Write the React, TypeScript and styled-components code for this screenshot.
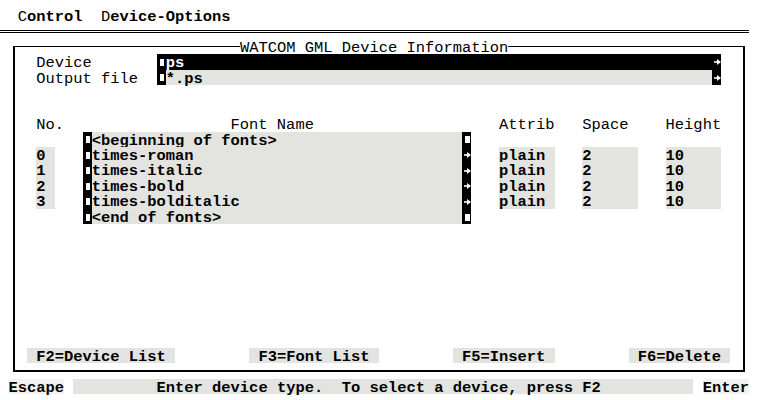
import React from "react";
import styled, { createGlobalStyle } from "styled-components";

const CW = 9.256;
const RH = 15.46;
const SHIFT = 2;
const cw = (n: number) => `${(n * CW).toFixed(3)}px`;
const GRAY = "#e3e4e0";

const GlobalStyle = createGlobalStyle`
  html, body { margin: 0; padding: 0; background: #fff; }
  body {
    font-family: "Liberation Mono", "Courier New", monospace;
    font-size: 15.43px;
    line-height: ${RH + 2 * SHIFT}px;
    color: #000;
  }
  #root { width: 761px; height: 400px; overflow: hidden; }
`;

const Screen = styled.div`
  width: 761px;
  height: 400px;
  padding-top: 7.9px;
  box-sizing: border-box;
  display: flex;
  flex-direction: column;
  white-space: pre;
`;

const MenuBar = styled.nav`
  display: flex;
  gap: ${cw(2)};
  height: ${RH}px;
  padding-left: ${(8.5 + CW).toFixed(3)}px;
`;
const MenuItem = styled.span`
  font-weight: 700;
`;
const Hot = styled.span`
  font-weight: 400;
`;

const RuleRow = styled.div`
  height: ${RH}px;
  display: flex;
  align-items: center;
`;
const DoubleRule = styled.div`
  width: 749px;
  height: 1px;
  border-top: 1px solid #000;
  border-bottom: 1px solid #000;
`;

const Dialog = styled.section`
  margin-top: 7.23px;
  margin-left: 13px;
  width: 732.3px;
  height: 326.15px;
  box-sizing: border-box;
  border: 2px solid #000;
  border-top-width: 1px;
  padding: 0 3.6px 6.72px 2.756px;
  display: flex;
  flex-direction: column;
`;

const TitleRow = styled.div`
  height: ${RH}px;
  margin-top: -8.23px;
  padding-left: ${cw(24)};
  display: flex;
`;
const Title = styled.span`
  background: #fff;
`;

const FieldRow = styled.div`
  display: flex;
  height: ${RH}px;
`;
const Label = styled.span`
  width: ${cw(15)};
  padding-left: ${cw(2)};
  box-sizing: border-box;
`;
const Field = styled.div`
  display: flex;
  width: ${cw(61)};
  background: #000;
`;
const FieldBody = styled.span<{ $active?: boolean }>`
  width: ${cw(59)};
  background: ${(p) => (p.$active ? "#000" : GRAY)};
  color: ${(p) => (p.$active ? "#fff" : "#000")};
  font-weight: 700;
`;

const BarCell = styled.span`
  width: ${cw(1)};
  height: ${RH}px;
  background: #000;
  display: flex;
  align-items: center;
  flex: none;
`;
const Block = styled.span`
  display: block;
  width: 4.5px;
  height: 7px;
  margin-left: 3px;
  margin-top: 1px;
  background: #fff;
`;
const ArrowSvg = styled.svg`
  display: block;
  margin-left: 2px;
  margin-top: 1px;
`;

const Arrow = () => (
  <ArrowSvg width="7" height="6" viewBox="0 0 7 6">
    <rect x="0" y="2.2" width="4" height="1.6" fill="#fff" />
    <polygon points="3,0 7,3 3,6" fill="#fff" />
  </ArrowSvg>
);

const Spacer = styled.div<{ $rows: number }>`
  height: ${(p) => (p.$rows * RH).toFixed(3)}px;
  flex: none;
`;
const Fill = styled.div`
  flex: 1;
`;

const TABLE_COLS = [2, 2, 3, 1, 40, 1, 3, 6, 3, 6, 3, 6, 2].map(cw).join(" ");

const TableRow = styled.div`
  display: grid;
  grid-template-columns: ${TABLE_COLS};
  grid-template-rows: ${RH}px;
  height: ${RH}px;
`;
const Head = styled.span<{ $col: number; $pad?: number }>`
  grid-column: ${(p) => p.$col};
  padding-left: ${(p) => cw(p.$pad ?? 0)};
`;
const DataCell = styled.span<{ $col: number; $filled?: boolean }>`
  grid-column: ${(p) => p.$col};
  background: ${(p) => (p.$filled ? GRAY : "transparent")};
  font-weight: 700;
`;
const EdgeCell = styled(BarCell)<{ $col: number }>`
  grid-column: ${(p) => p.$col};
`;

const FKeyRow = styled.div`
  display: flex;
  gap: ${cw(8)};
  padding-left: ${cw(1)};
  height: ${RH}px;
`;
const FKey = styled.span`
  background: ${GRAY};
  padding: 0 ${cw(1)};
  font-weight: 700;
`;

const StatusBar = styled.footer`
  margin-top: 6.74px;
  padding-left: 8.5px;
  display: flex;
  gap: ${cw(1)};
  height: ${RH}px;
  font-weight: 700;
`;
const StatusKey = styled.span`
  background: #f2f2f0;
`;
const StatusMsg = styled.span`
  width: ${cw(67)};
  padding-left: ${cw(9)};
  box-sizing: border-box;
  background: ${GRAY};
`;

const fonts = [
  { no: "", name: "<beginning of fonts>", edge: "block" },
  { no: "0", name: "times-roman", edge: "arrow" },
  { no: "1", name: "times-italic", edge: "arrow" },
  { no: "2", name: "times-bold", edge: "arrow" },
  { no: "3", name: "times-bolditalic", edge: "arrow" },
  { no: "", name: "<end of fonts>", edge: "block" },
];

export default function App() {
  return (
    <>
      <GlobalStyle />
      <Screen>
        <MenuBar>
          <MenuItem>
            <Hot>C</Hot>ontrol
          </MenuItem>
          <MenuItem>
            <Hot>D</Hot>evice-Options
          </MenuItem>
        </MenuBar>
        <RuleRow>
          <DoubleRule />
        </RuleRow>
        <Dialog>
          <TitleRow>
            <Title>WATCOM GML Device Information</Title>
          </TitleRow>
          <FieldRow>
            <Label>Device</Label>
            <Field>
              <BarCell>
                <Block />
              </BarCell>
              <FieldBody $active>ps</FieldBody>
              <BarCell>
                <Arrow />
              </BarCell>
            </Field>
          </FieldRow>
          <FieldRow>
            <Label>Output file</Label>
            <Field>
              <BarCell>
                <Block />
              </BarCell>
              <FieldBody>*.ps</FieldBody>
              <BarCell>
                <Arrow />
              </BarCell>
            </Field>
          </FieldRow>
          <Spacer $rows={2} />
          <TableRow>
            <Head $col={2}>No.</Head>
            <Head $col={5} $pad={15}>Font Name</Head>
            <Head $col={8}>Attrib</Head>
            <Head $col={10}>Space</Head>
            <Head $col={12}>Height</Head>
          </TableRow>
          {fonts.map((f, i) => {
            const filled = f.no !== "";
            return (
              <TableRow key={i}>
                <DataCell $col={2} $filled={filled}>{f.no}</DataCell>
                <EdgeCell $col={4}>
                  <Block />
                </EdgeCell>
                <DataCell $col={5} $filled>{f.name}</DataCell>
                <EdgeCell $col={6}>
                  {f.edge === "arrow" ? <Arrow /> : <Block />}
                </EdgeCell>
                <DataCell $col={8} $filled={filled}>{filled ? "plain" : ""}</DataCell>
                <DataCell $col={10} $filled={filled}>{filled ? "2" : ""}</DataCell>
                <DataCell $col={12} $filled={filled}>{filled ? "10" : ""}</DataCell>
              </TableRow>
            );
          })}
          <Fill />
          <FKeyRow>
            <FKey>F2=Device List</FKey>
            <FKey>F3=Font List</FKey>
            <FKey>F5=Insert</FKey>
            <FKey>F6=Delete</FKey>
          </FKeyRow>
        </Dialog>
        <StatusBar>
          <StatusKey>Escape</StatusKey>
          <StatusMsg>Enter device type.  To select a device, press F2</StatusMsg>
          <StatusKey>Enter</StatusKey>
        </StatusBar>
      </Screen>
    </>
  );
}
